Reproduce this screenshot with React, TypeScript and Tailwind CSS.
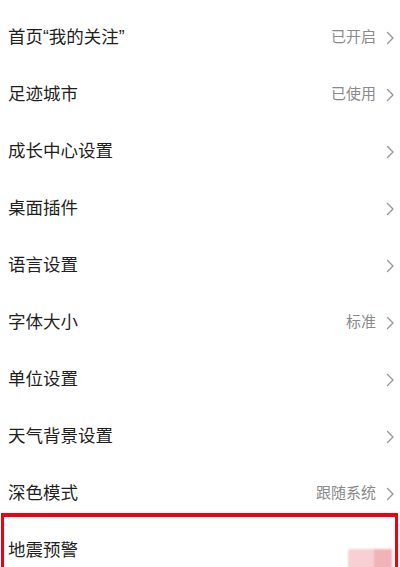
import { ReactNode } from "react";

type Item = {
  label: string;
  value?: string;
  toggle?: boolean;
};

const items: Item[] = [
  { label: "首页“我的关注”", value: "已开启" },
  { label: "足迹城市", value: "已使用" },
  { label: "成长中心设置" },
  { label: "桌面插件" },
  { label: "语言设置" },
  { label: "字体大小", value: "标准" },
  { label: "单位设置" },
  { label: "天气背景设置" },
  { label: "深色模式", value: "跟随系统" },
  { label: "地震预警", toggle: true },
];

const Chevron = () => (
  <svg width="9" height="14" viewBox="0 0 9 14" fill="none" className="ml-[10px] mr-[1px]">
    <path d="M1.5 1.5 7 7l-5.5 5.5" stroke="#999999" strokeWidth="1.4" strokeLinecap="round" strokeLinejoin="round" />
  </svg>
);

const Toggle = () => (
  <div className="flex h-[24px] w-[44px] mr-[4px] mt-[20px] rounded-[2px] bg-[#f8cfd2] blur-[1px]">
    <div className="ml-auto h-full w-[18px] bg-[#efb3b8]" />
  </div>
);

const Row = ({ item, children }: { item: Item; children?: ReactNode }) => (
  <div className="relative flex h-[57px] items-center pl-[8px] pr-[4px]">
    {children}
    <span className="text-[17.5px] text-[#1f1f1f]">{item.label}</span>
    <div className="ml-auto flex items-center">
      {item.toggle ? (
        <Toggle />
      ) : (
        <>
          {item.value && <span className="text-[15px] text-[#8a8a8a]">{item.value}</span>}
          <Chevron />
        </>
      )}
    </div>
  </div>
);

export default function App() {
  return (
    <div
      className="h-[567px] w-[400px] overflow-hidden bg-white pt-[9px]"
      style={{ fontFamily: '"Liberation Sans", "Noto Sans CJK SC", sans-serif' }}
    >
      {items.map((item) =>
        item.toggle ? (
          <Row key={item.label} item={item}>
            {/* highlight frame around the earthquake alert row */}
            <div className="pointer-events-none absolute left-[1px] top-[-9px] h-[70px] w-[397px] border-[3px] border-t-[4px] border-[#f00010]" />
          </Row>
        ) : (
          <Row key={item.label} item={item} />
        )
      )}
    </div>
  );
}
